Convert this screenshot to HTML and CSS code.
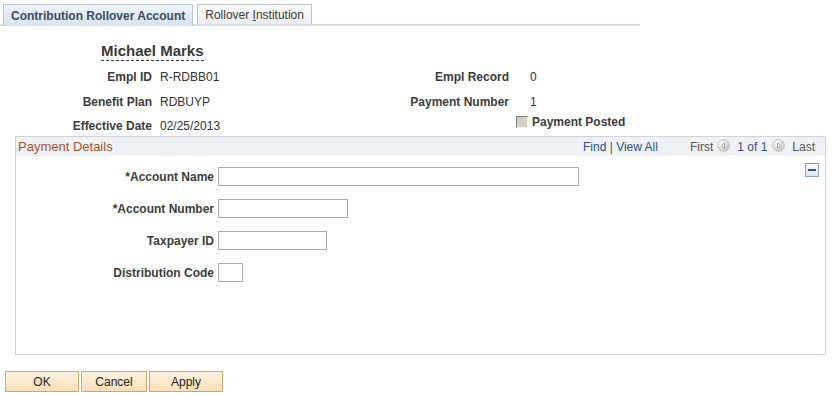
FILE: index.html
```html
<!DOCTYPE html>
<html lang="en">
<head>
    <meta charset="UTF-8">
    <title>Contribution Rollover Account</title>
    <link rel="stylesheet" href="styles.css">
</head>
<body>

<div class="tabs">
    <div class="tab active">Contribution Rollover Account</div>
    <div class="tab">Rollover <u>I</u>nstitution</div>
</div>

<!-- employee summary -->
<div class="name"><span>Michael Marks</span></div>
<div class="summary">
    <span class="lbl">Empl ID</span>
    <span class="val">R-RDBB01</span>
    <span class="lbl">Empl Record</span>
    <span class="val val-r">0</span>

    <span class="lbl">Benefit Plan</span>
    <span class="val">RDBUYP</span>
    <span class="lbl">Payment Number</span>
    <span class="val val-r">1</span>

    <span class="lbl last">Effective Date</span>
    <span class="val last">02/25/2013</span>
    <span></span>
    <span class="posted"><span class="chk"></span>Payment Posted</span>
</div>

<!-- payment details grid -->
<div class="grid">
    <div class="grid-head">
        <span class="grid-title">Payment Details</span>
        <span class="grid-nav">
            <span class="link">Find</span> | <span class="link">View All</span>
            <span class="first">First</span>
            <svg class="arrow" width="13" height="13" viewBox="0 0 13 13">
                <defs>
                    <radialGradient id="ball" cx="0.35" cy="0.3" r="0.75">
                        <stop offset="0" stop-color="#ffffff"/>
                        <stop offset="1" stop-color="#bfbfbf"/>
                    </radialGradient>
                </defs>
                <circle cx="6.5" cy="6.5" r="6" fill="url(#ball)" stroke="#c6c6c6"/>
                <path d="M4.5 6.5 L7.5 4 L7.5 9 Z" fill="#fff" stroke="#8c8c8c" stroke-width="0.8"/>
            </svg>
            <span class="count">1 of 1</span>
            <svg class="arrow" width="13" height="13" viewBox="0 0 13 13">
                <circle cx="6.5" cy="6.5" r="6" fill="url(#ball)" stroke="#c6c6c6"/>
                <path d="M8.5 6.5 L5.5 4 L5.5 9 Z" fill="#fff" stroke="#8c8c8c" stroke-width="0.8"/>
            </svg>
            <span class="last-link">Last</span>
        </span>
    </div>
    <div class="grid-body">
        <div class="form">
            <label class="flbl">*Account Name</label>
            <input type="text" class="inp w-name">
            <label class="flbl">*Account Number</label>
            <input type="text" class="inp w-num">
            <label class="flbl">Taxpayer ID</label>
            <input type="text" class="inp w-tax">
            <label class="flbl">Distribution Code</label>
            <input type="text" class="inp w-code">
        </div>
        <div class="collapse"><span></span></div>
    </div>
</div>

<div class="buttons">
    <button class="btn w-ok">OK</button>
    <button class="btn w-cancel">Cancel</button>
    <button class="btn w-ok">Apply</button>
</div>

</body>
</html>
```

FILE: styles.css
```css
body {
    font-family: "Liberation Sans", Arial, sans-serif;
    font-size: 12px;
    color: #333;
    margin: 0;
    padding: 0;
    background-color: #fff;
}
.tabs {
    display: flex;
    align-items: flex-end;
    gap: 4px;
    width: 640px;
    height: 26px;
    padding: 4px 0 0 3px;
    box-sizing: border-box;
    border-bottom: 2px solid #d3e0ee;
}
.tab {
    height: 19px;
    line-height: 20px;
    padding: 0 7px;
    border: 1px solid #bcc4cc;
    border-bottom: none;
    background: linear-gradient(#fbfbfb, #ececec);
    color: #3a3a3a;
}
.tab.active {
    height: 21px;
    line-height: 23px;
    margin-bottom: -2px;
    border-color: #b7c7d9;
    background: linear-gradient(#eef3f9, #d6e3f2);
    font-weight: bold;
    color: #3b4b5e;
}
.name {
    height: 37px;
    box-sizing: border-box;
    padding: 16px 0 0 101px;
}
.name span {
    display: inline-block;
    line-height: 18px;
    font-size: 15px;
    font-weight: bold;
    color: #3a3a3a;
    border-bottom: 1px dashed #333;
}
.summary {
    display: grid;
    grid-template-columns: 152px 208px 149px auto;
    grid-template-rows: 25px 25px 21px;
    margin-top: 2px;
    line-height: 25px;
}
.lbl {
    text-align: right;
    font-weight: bold;
    color: #3c3c3c;
}
.val {
    padding-left: 8px;
}
.val-r {
    padding-left: 21px;
}
.last {
    line-height: 14px;
    padding-top: 4px;
}
.posted {
    display: flex;
    align-items: center;
    padding: 0 0 0 7px;
    line-height: 14px;
    height: 14px;
    font-weight: bold;
    color: #3c3c3c;
}
.chk {
    width: 12px;
    height: 12px;
    box-sizing: border-box;
    margin-right: 4px;
    background-color: #d4d0c8;
    border-top: 1px solid #808080;
    border-left: 1px solid #808080;
    border-right: 1px solid #f4f4f4;
    border-bottom: 1px solid #f4f4f4;
}
.grid {
    margin-left: 15px;
    width: 811px;
    height: 219px;
    box-sizing: border-box;
    border: 1px solid #cfd2d6;
}
.grid-head {
    display: flex;
    justify-content: space-between;
    align-items: center;
    height: 19px;
    padding: 0 10px 0 2px;
    background-color: #eff2f4;
}
.grid-title {
    color: #a4522a;
    font-size: 13px;
}
.grid-nav {
    display: flex;
    align-items: center;
    color: #555;
    white-space: pre;
}
.link {
    color: #2f4f86;
}
.first {
    margin-left: 32px;
    margin-right: 4px;
    color: #555;
}
.arrow {
    display: block;
    margin-top: -2px;
}
.count {
    margin: 0 5px 0 7px;
    color: #3a4f7e;
}
.last-link {
    margin-left: 7px;
    color: #555;
}
.grid-body {
    display: flex;
    justify-content: space-between;
    padding: 7px 6px 0 0;
}
.form {
    display: grid;
    grid-template-columns: 198px auto;
    grid-auto-rows: 19px;
    column-gap: 4px;
    row-gap: 13px;
    margin-top: 4px;
    align-items: center;
}
.flbl {
    text-align: right;
    font-weight: bold;
    color: #3c3c3c;
}
.inp {
    height: 19px;
    box-sizing: border-box;
    border: 1px solid #a9a9a9;
    margin: 0;
    padding: 0 2px;
    font-family: inherit;
    font-size: 12px;
}
.w-name { width: 361px; }
.w-num { width: 130px; }
.w-tax { width: 109px; }
.w-code { width: 25px; }
.collapse {
    width: 14px;
    height: 14px;
    box-sizing: border-box;
    border: 1px solid #8aa3bd;
    background: linear-gradient(#ffffff, #dde5ee);
    display: flex;
    align-items: center;
    justify-content: center;
}
.collapse span {
    width: 8px;
    height: 2px;
    background-color: #2f5592;
}
.buttons {
    display: flex;
    gap: 2px;
    padding: 16px 0 0 5px;
}
.btn {
    height: 21px;
    border: 1px solid #d5a46c;
    background: linear-gradient(#fdf3e2, #f9dfb5);
    font-family: inherit;
    font-size: 12px;
    color: #222;
    padding: 0;
}
.w-ok { width: 74px; }
.w-cancel { width: 66px; }
```
